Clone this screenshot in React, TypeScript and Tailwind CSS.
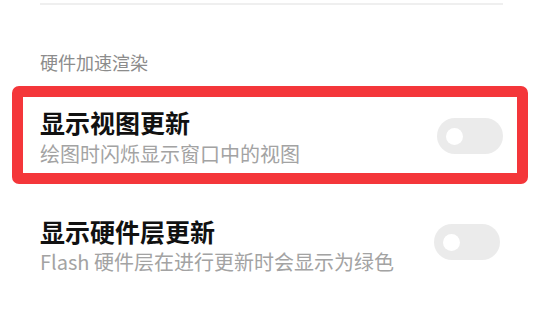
import React from "react";

function Toggle() {
  return (
    <div className="flex h-[36px] w-[66px] shrink-0 items-center rounded-full bg-[#ebebeb] pl-[9px]">
      <div className="h-[17px] w-[17px] rounded-full bg-white" />
    </div>
  );
}

export default function App() {
  return (
    <div
      className="h-[316px] w-[540px] overflow-hidden bg-white"
      style={{ fontFamily: '"Noto Sans CJK SC", "Noto Sans", sans-serif' }}
    >
      <div className="ml-[40px] mr-[37px] mt-[3px] h-[2px] bg-[#efefef]" />
      <div className="mt-[45px] pl-[40px] text-[18px] leading-[24px] text-[#8c8c8c]">
        硬件加速渲染
      </div>
      <div className="mx-[12px] mt-[12px] h-[98px] rounded-[7px] border-[11px] border-[#f4363a]">
        <div className="flex items-start justify-between pl-[17px] pr-[14px] pt-[9px]">
          <div className="flex flex-col">
            <div className="text-[25px] font-semibold leading-[32px] text-[#111111]">显示视图更新</div>
            <div className="text-[20px] leading-[32px] text-[#a3a3a3]">绘图时闪烁显示窗口中的视图</div>
          </div>
          <div className="mt-[12px]">
            <Toggle />
          </div>
        </div>
      </div>
      <div className="flex items-start justify-between pl-[40px] pr-[40px] pt-[31px]">
        <div className="flex flex-col">
          <div className="text-[25px] font-semibold leading-[32px] text-[#111111]">显示硬件层更新</div>
          <div className="text-[20px] leading-[30px] text-[#a3a3a3]">Flash 硬件层在进行更新时会显示为绿色</div>
        </div>
        <div className="mt-[9px]">
          <Toggle />
        </div>
      </div>
    </div>
  );
}
